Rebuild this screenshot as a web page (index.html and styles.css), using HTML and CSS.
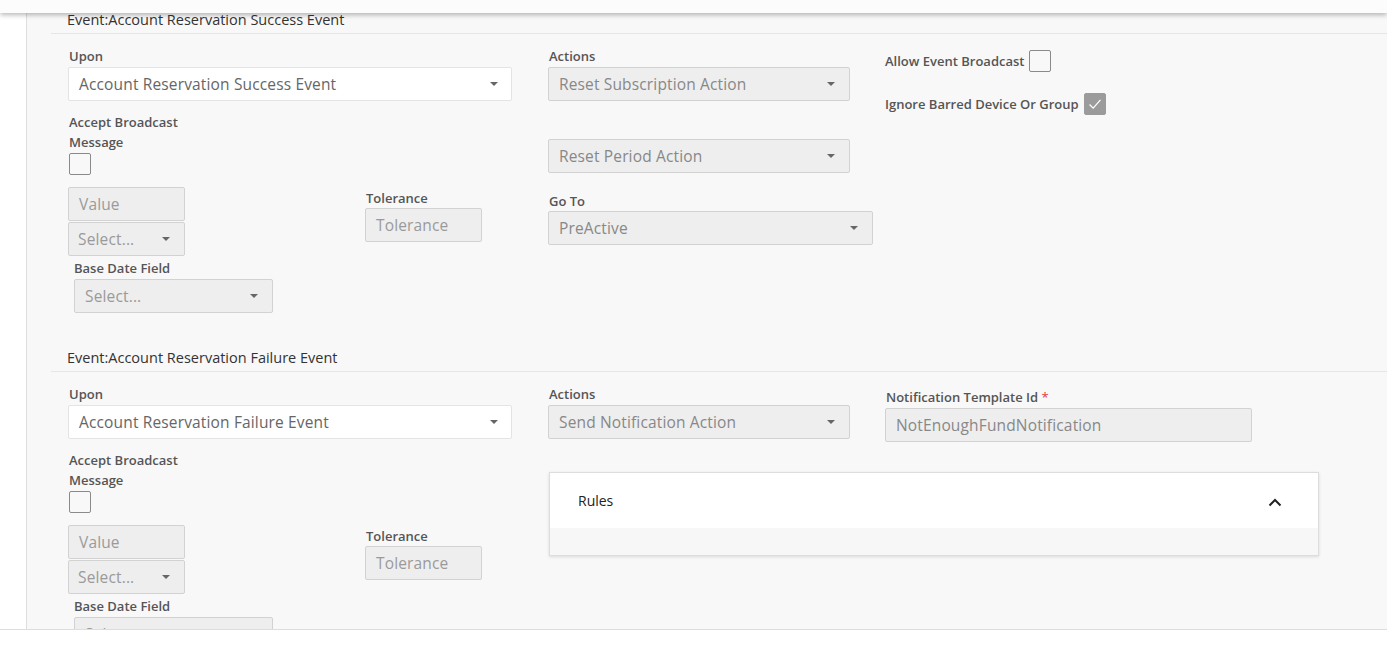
FILE: index.html
```html
<!DOCTYPE html>
<html lang="en">
<head>
<meta charset="utf-8">
<title>Events</title>
<link rel="stylesheet" href="styles.css">
</head>
<body>
<div class="topbar"></div>
<div class="main">
  <div class="rail"></div>
  <div class="content">

    <section class="event">
      <div class="event-title">Event:Account Reservation Success Event</div>
      <div class="event-body">
        <div class="col-main">
          <div class="lbl">Upon</div>
          <div class="select select-white w-upon"><span>Account Reservation Success Event</span><i class="caret"></i></div>
          <div class="lbl lbl-wrap">Accept Broadcast Message</div>
          <span class="checkbox cb-accept"></span>
          <div class="pair-row">
            <div class="stack">
              <div class="input ph w-small">Value</div>
              <div class="select select-small w-small"><span class="ph">Select...</span><i class="caret"></i></div>
            </div>
            <div class="tol">
              <div class="lbl">Tolerance</div>
              <div class="input ph w-small">Tolerance</div>
            </div>
          </div>
          <div class="base">
            <div class="lbl">Base Date Field</div>
            <div class="select w-base"><span class="ph">Select...</span><i class="caret"></i></div>
          </div>
        </div>
        <div class="col-side">
          <div class="side-row">
            <div class="col-actions">
              <div class="lbl">Actions</div>
              <div class="select w-action"><span>Reset Subscription Action</span><i class="caret"></i></div>
              <div class="select w-action second"><span>Reset Period Action</span><i class="caret"></i></div>
              <div class="lbl goto-lbl">Go To</div>
              <div class="select w-goto"><span>PreActive</span><i class="caret"></i></div>
            </div>
            <div class="col-opts">
              <div class="opt">
                <span class="lbl">Allow Event Broadcast</span>
                <span class="checkbox"></span>
              </div>
              <div class="opt opt-second">
                <span class="lbl">Ignore Barred Device Or Group</span>
                <span class="checkbox checked"><svg viewBox="0 0 22 22" width="20" height="20"><polyline points="5,11.5 9,15.5 17,6.5" fill="none" stroke="#fff" stroke-width="1.4"/></svg></span>
              </div>
            </div>
          </div>
        </div>
      </div>
    </section>

    <section class="event">
      <div class="event-title">Event:Account Reservation Failure Event</div>
      <div class="event-body">
        <div class="col-main">
          <div class="lbl">Upon</div>
          <div class="select select-white w-upon"><span>Account Reservation Failure Event</span><i class="caret"></i></div>
          <div class="lbl lbl-wrap">Accept Broadcast Message</div>
          <span class="checkbox cb-accept"></span>
          <div class="pair-row">
            <div class="stack">
              <div class="input ph w-small">Value</div>
              <div class="select select-small w-small"><span class="ph">Select...</span><i class="caret"></i></div>
            </div>
            <div class="tol">
              <div class="lbl">Tolerance</div>
              <div class="input ph w-small">Tolerance</div>
            </div>
          </div>
          <div class="base">
            <div class="lbl">Base Date Field</div>
            <div class="select w-base"><span class="ph">Select...</span><i class="caret"></i></div>
          </div>
        </div>
        <div class="col-side">
          <div class="side-row">
            <div class="col-actions">
              <div class="lbl">Actions</div>
              <div class="select w-action"><span>Send Notification Action</span><i class="caret"></i></div>
            </div>
            <div class="col-notif">
              <div class="lbl">Notification Template Id <span class="req">*</span></div>
              <div class="input w-notif">NotEnoughFundNotification</div>
            </div>
          </div>
          <div class="rules">
            <div class="rules-head">
              <span>Rules</span>
              <svg class="chev" viewBox="0 0 14 9" width="14" height="9"><polyline points="1.5,7.5 7,2 12.5,7.5" fill="none" stroke="#222" stroke-width="2"/></svg>
            </div>
            <div class="rules-body"></div>
          </div>
        </div>
      </div>
    </section>

  </div>
</div>
<div class="footer"></div>
</body>
</html>
```

FILE: styles.css
```css
* { box-sizing: border-box; }
html, body { margin: 0; padding: 0; }
body {
  width: 1387px;
  height: 663px;
  overflow: hidden;
  display: flex;
  flex-direction: column;
  font-family: "Open Sans", "Liberation Sans", sans-serif;
  background: #ffffff;
  position: relative;
}
.topbar {
  position: absolute;
  top: 0; left: 0; right: 0;
  height: 13px;
  background: #fcfcfc;
  box-shadow: 0 2px 5px rgba(0,0,0,0.28);
  z-index: 5;
}
.main {
  height: 629px;
  display: flex;
  overflow: hidden;
}
.rail {
  width: 27px;
  flex: none;
  background: #ffffff;
  border-right: 1px solid #dedede;
}
.content {
  flex: 1;
  background: #f8f8f8;
  padding-top: 9px;
  overflow: hidden;
}
.footer {
  flex: 1;
  background: #ffffff;
  border-top: 1px solid #dddddd;
}
.event {
  margin-left: 24px;
}
.event-title {
  font-size: 14.5px;
  line-height: 20px;
  color: #333;
  padding: 1px 0 3px 16px;
  border-bottom: 1px solid #e6e6e6;
  white-space: nowrap;
}
.event-body {
  display: flex;
  padding: 14px 0 34px 17px;
}
.col-main {
  width: 480px;
  flex: none;
  display: flex;
  flex-direction: column;
  align-items: flex-start;
}
.col-side {
  flex: 1;
  display: flex;
  flex-direction: column;
}
.side-row { display: flex; }
.col-actions {
  width: 337px;
  flex: none;
  display: flex;
  flex-direction: column;
  align-items: flex-start;
}
.col-opts { padding-top: 2px; }
.col-notif { padding-top: 3px; }

.lbl {
  font-size: 13px;
  line-height: 16px;
  font-weight: 600;
  color: #555;
  margin-bottom: 3px;
  padding-left: 1px;
  display: block;
  white-space: nowrap;
}
.lbl-wrap {
  width: 122px;
  white-space: normal;
  line-height: 20px;
  margin: 11px 0 1px;
}
.req { color: #e53935; font-weight: 400; }

.select, .input {
  height: 34px;
  border: 1px solid #d2d2d2;
  border-radius: 2px;
  background: #eeeeee;
  font-size: 15.5px;
  letter-spacing: 0.15px;
  color: #888;
  display: flex;
  align-items: center;
  padding: 0 14px 0 10px;
}
.select span { white-space: nowrap; }
.select-white {
  background: #ffffff;
  border-color: #e4e4e4;
  color: #666;
}
.select-small { padding-left: 9px; margin-top: 1px; }
.ph { color: #9a9a9a; }
.caret {
  margin-left: auto;
  width: 0; height: 0;
  border-left: 4px solid transparent;
  border-right: 4px solid transparent;
  border-top: 4px solid #666;
}
.select-white .caret { margin-right: -1px; }

.w-upon { width: 444px; }
.w-small { width: 117px; }
.w-base { width: 199px; }
.w-action { width: 302px; }
.w-goto { width: 325px; }
.w-notif { width: 367px; }
.second { margin-top: 38px; }
.goto-lbl { margin-top: 20px; margin-bottom: 2px; }

.checkbox {
  width: 22px;
  height: 22px;
  border: 1px solid #8a8a8a;
  border-radius: 2px;
  background: transparent;
  display: inline-flex;
  align-items: center;
  justify-content: center;
  flex: none;
}
.cb-accept { margin-left: 1px; }
.checkbox.checked {
  background: #9b9b9b;
  border-color: #9b9b9b;
}

.pair-row {
  display: flex;
  align-items: flex-start;
  margin-top: 12px;
}
.stack { display: flex; flex-direction: column; }
.tol { margin-left: 180px; margin-top: 3px; }
.tol .lbl { margin-bottom: 2px; }
.base { margin: 4px 0 0 6px; }
.base .lbl { padding-left: 0; }

.opt {
  display: flex;
  align-items: center;
  gap: 5px;
}
.opt .lbl { margin-bottom: 0; padding-left: 0; }
.opt-second { margin-top: 21px; }

.rules {
  margin-top: 30px;
  margin-left: 1px;
  width: 770px;
  border: 1px solid #dddddd;
  background: #ffffff;
  box-shadow: 0 1px 3px rgba(0,0,0,0.12);
}
.rules-head {
  height: 55px;
  display: flex;
  align-items: center;
  justify-content: space-between;
  padding: 0 36px 0 28px;
  font-size: 14px;
  color: #222;
}
.rules-head .chev { margin-top: 3px; }
.rules-body {
  height: 27px;
  background: #f7f7f7;
}
```
